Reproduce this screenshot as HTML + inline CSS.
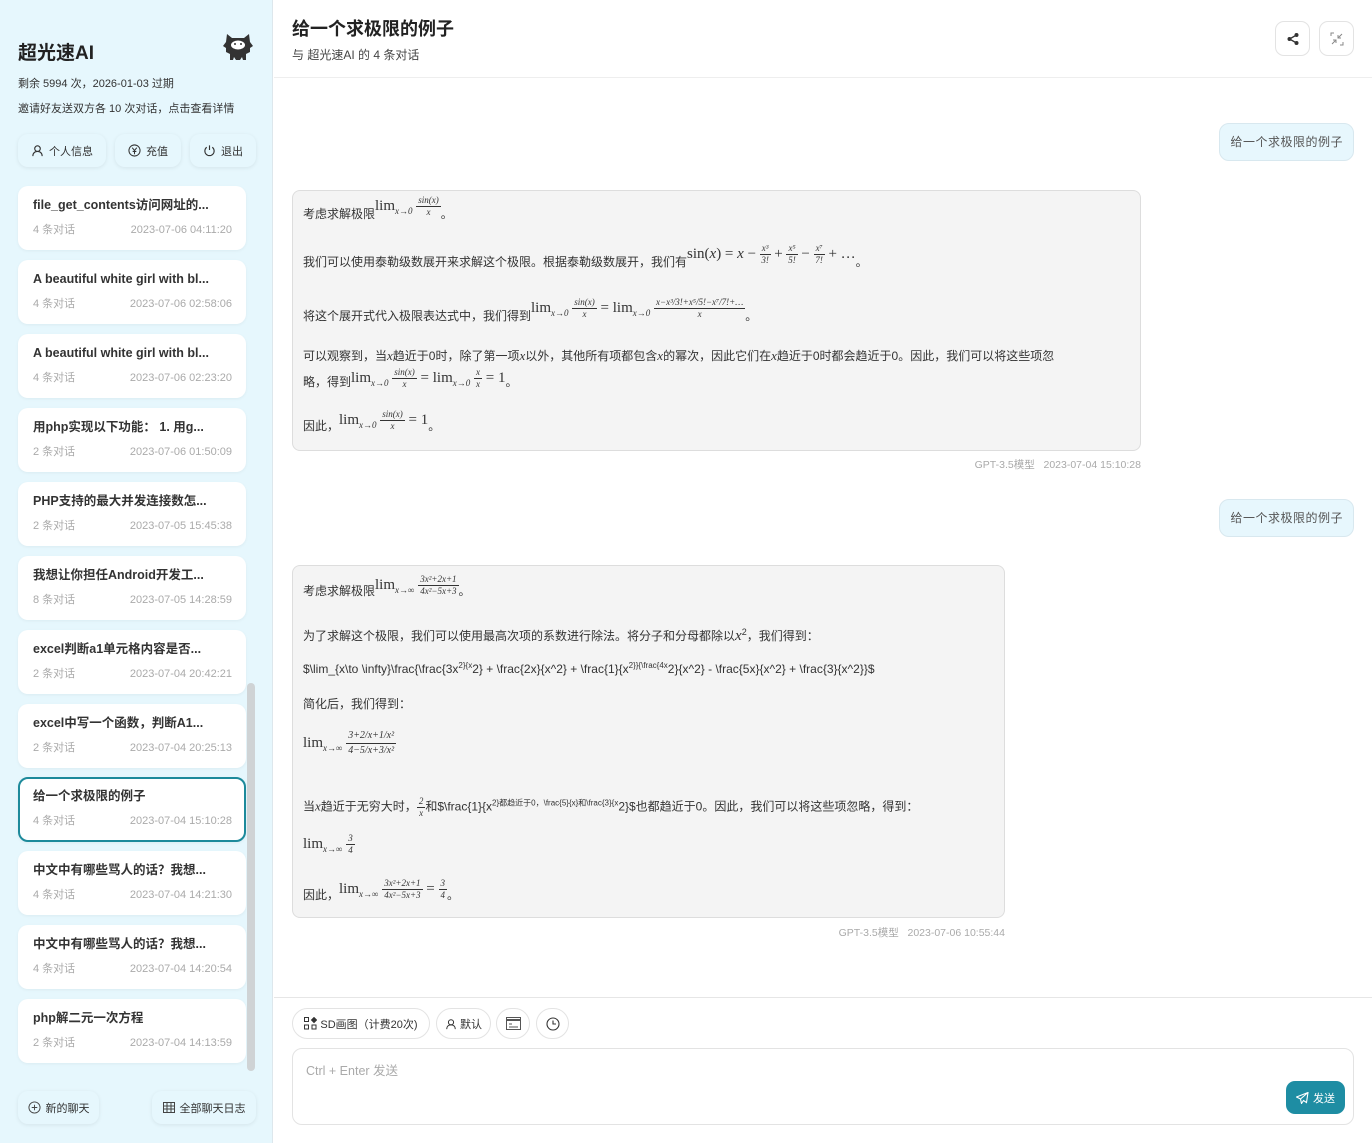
<!DOCTYPE html>
<html><head><meta charset="utf-8"><style>
*{box-sizing:border-box;margin:0;padding:0}
body{width:1372px;height:1143px;overflow:hidden;font-family:"Liberation Sans","Noto Sans CJK SC",sans-serif;background:#fff;color:#333;position:relative}
.sb{position:absolute;left:0;top:0;width:273px;height:1143px;background:#e6f7fd;border-right:1px solid #dde7ec}
.logo{position:absolute;left:18px;top:38px;font-size:19px;font-weight:bold;color:#222}
.sm{position:absolute;left:18px;font-size:11px;color:#333}
.btn{position:absolute;top:134px;height:33px;background:#e6f7fd;border-radius:10px;box-shadow:0 1px 4px rgba(0,0,0,.08);font-size:11px;color:#333;display:flex;align-items:center;justify-content:center;gap:5px}
.card{position:absolute;left:18px;width:228px;height:64px;background:#fff;border-radius:10px;box-shadow:0 1px 3px rgba(0,0,0,.05)}
.card .t{position:absolute;left:15px;top:9px;font-size:12.5px;font-weight:bold;color:#333;white-space:nowrap;line-height:20px}
.card .c,.card .d{position:absolute;top:37px;font-size:11px;color:#aaa;line-height:14px}
.card .c{left:15px}
.card .d{right:14px}
.card.sel{border:2px solid #1d8a9b}
.card.sel .t{left:13px;top:7px}.card.sel .c{left:13px;top:35px}.card.sel .d{right:12px;top:35px}
.scroll{position:absolute;left:247px;top:683px;width:8px;height:388px;background:#cfd3d5;border-radius:4px}
.hd{position:absolute;left:274px;top:0;right:0;height:78px;border-bottom:1px solid #eee}
.ib{position:absolute;top:21px;width:35px;height:35px;border:1px solid #e3e3e3;border-radius:9px;display:flex;align-items:center;justify-content:center}
.ub{position:absolute;right:18px;height:38px;padding:0 10px;background:#e7f7fd;border:1px solid #d8e8ef;border-radius:10px;font-size:12px;color:#555;line-height:36px;letter-spacing:.5px}
.ab{position:absolute;left:292px;background:#f4f4f4;border:1px solid #ddd;border-radius:8px;font-size:12px;color:#333}
.m{font-family:"Liberation Serif","DejaVu Serif",serif;font-size:15px}
.ln{position:absolute;left:10px;white-space:nowrap}
.fr{display:inline-flex;flex-direction:column;align-items:center;vertical-align:middle;font-size:9px;font-family:"Liberation Serif",serif;font-style:italic;line-height:11px}
.fr span:first-child{border-bottom:1px solid #333;padding:0 2px}
sub{font-size:9px;font-style:italic}
.meta{position:absolute;font-size:10.5px;color:#aaa}
.bot{position:absolute;left:274px;right:0;top:997px;bottom:0;border-top:1px solid #e6e6e6}
.pill{position:absolute;top:10px;height:31px;border:1px solid #e3e3e3;border-radius:16px;font-size:11px;color:#333;display:flex;align-items:center;justify-content:center;gap:3px}
</style></head><body>
<div class="sb">
<div class="logo">超光速AI</div>
<svg style="position:absolute;left:222px;top:30px" width="32" height="32" viewBox="0 0 32 32"><path d="M5 4l5 4h12l5-4 1 8 3 4-3 2v4l-4 2v6h-3l-1-3-2 3h-4l-2-3-1 3H8v-6l-4-2v-4l-3-2 3-4z" fill="#333"/><ellipse cx="16" cy="15" rx="7" ry="4.5" fill="#fff"/><circle cx="13" cy="14" r="1" fill="#333"/><circle cx="19" cy="14" r="1" fill="#333"/></svg>
<div class="sm" style="top:75px">剩余 5994 次，2026-01-03 过期</div>
<div class="sm" style="top:100px">邀请好友送双方各 10 次对话，点击查看详情</div>
<div class="btn" style="left:18px;width:88px"><svg width="13" height="13" viewBox="0 0 14 14" fill="none" stroke="#333" stroke-width="1.2"><circle cx="7" cy="5" r="3"/><path d="M2 13c0-3 2-5 5-5s5 2 5 5"/></svg>个人信息</div>
<div class="btn" style="left:115px;width:66px"><svg width="13" height="13" viewBox="0 0 14 14" fill="none" stroke="#333" stroke-width="1.1"><circle cx="7" cy="7" r="6"/><path d="M4.5 4L7 7l2.5-3M7 7v4M5 8h4"/></svg>充值</div>
<div class="btn" style="left:190px;width:66px"><svg width="13" height="13" viewBox="0 0 14 14" fill="none" stroke="#333" stroke-width="1.2"><path d="M4 3.5a5 5 0 1 0 6 0M7 1.5v5"/></svg>退出</div>

<div class="card" style="top:186px"><div class="t">file_get_contents访问网址的...</div><div class="c">4 条对话</div><div class="d">2023-07-06 04:11:20</div></div>
<div class="card" style="top:260px"><div class="t">A beautiful white girl with bl...</div><div class="c">4 条对话</div><div class="d">2023-07-06 02:58:06</div></div>
<div class="card" style="top:334px"><div class="t">A beautiful white girl with bl...</div><div class="c">4 条对话</div><div class="d">2023-07-06 02:23:20</div></div>
<div class="card" style="top:408px"><div class="t">用php实现以下功能： 1. 用g...</div><div class="c">2 条对话</div><div class="d">2023-07-06 01:50:09</div></div>
<div class="card" style="top:482px"><div class="t">PHP支持的最大并发连接数怎...</div><div class="c">2 条对话</div><div class="d">2023-07-05 15:45:38</div></div>
<div class="card" style="top:556px"><div class="t">我想让你担任Android开发工...</div><div class="c">8 条对话</div><div class="d">2023-07-05 14:28:59</div></div>
<div class="card" style="top:630px"><div class="t">excel判断a1单元格内容是否...</div><div class="c">2 条对话</div><div class="d">2023-07-04 20:42:21</div></div>
<div class="card" style="top:704px"><div class="t">excel中写一个函数，判断A1...</div><div class="c">2 条对话</div><div class="d">2023-07-04 20:25:13</div></div>
<div class="card sel" style="top:777px;height:65px"><div class="t">给一个求极限的例子</div><div class="c">4 条对话</div><div class="d">2023-07-04 15:10:28</div></div>
<div class="card" style="top:851px"><div class="t">中文中有哪些骂人的话？我想...</div><div class="c">4 条对话</div><div class="d">2023-07-04 14:21:30</div></div>
<div class="card" style="top:925px"><div class="t">中文中有哪些骂人的话？我想...</div><div class="c">4 条对话</div><div class="d">2023-07-04 14:20:54</div></div>
<div class="card" style="top:999px"><div class="t">php解二元一次方程</div><div class="c">2 条对话</div><div class="d">2023-07-04 14:13:59</div></div>
<div class="scroll"></div>
<div class="btn" style="top:1091px;left:18px;width:81px"><svg width="13" height="13" viewBox="0 0 14 14" fill="none" stroke="#444" stroke-width="1"><circle cx="7" cy="7" r="6"/><path d="M7 4v6M4 7h6"/></svg>新的聊天</div>
<div class="btn" style="top:1091px;left:152px;width:104px"><svg width="12" height="11" viewBox="0 0 12 11" fill="none" stroke="#444" stroke-width="1"><rect x=".5" y=".5" width="11" height="10"/><path d="M.5 4h11M.5 7h11M4 .5v10M8 .5v10"/></svg>全部聊天日志</div>
</div>

<div class="hd">
<div style="position:absolute;left:18px;top:15px;font-size:18px;font-weight:bold;color:#222">给一个求极限的例子</div>
<div style="position:absolute;left:18px;top:46px;font-size:12px;color:#444">与 超光速AI 的 4 条对话</div>
<div class="ib" style="left:1001px"><svg width="14" height="14" viewBox="0 0 14 14"><circle cx="10.5" cy="3" r="2" fill="#333"/><circle cx="10.5" cy="11" r="2" fill="#333"/><circle cx="3.5" cy="7" r="2" fill="#333"/><path d="M10.5 3L3.5 7l7 4" stroke="#333" stroke-width="1.3" fill="none"/></svg></div>
<div class="ib" style="left:1045px"><svg width="14" height="14" viewBox="0 0 14 14" fill="none" stroke="#888" stroke-width="1"><path d="M1 4V1h3M13 10v3h-3M12 2L8 6M8 3v3h3M2 12l4-4M3 8h3v3"/></svg></div>
</div>

<div class="ub" style="top:123px">给一个求极限的例子</div>
<div class="ab" style="top:190px;width:849px;height:261px">
<div class="ln" style="top:12px">考虑求解极限<span class="m" style="position:relative;top:-8px">lim<sub>x→0</sub> <span class="fr"><span>sin(x)</span><span>x</span></span></span>。</div>
<div class="ln" style="top:60px">我们可以使用泰勒级数展开来求解这个极限。根据泰勒级数展开，我们有<span class="m" style="position:relative;top:-8px">sin(<i>x</i>) = <i>x</i> − <span class="fr"><span>x³</span><span>3!</span></span> + <span class="fr"><span>x⁵</span><span>5!</span></span> − <span class="fr"><span>x⁷</span><span>7!</span></span> + …</span>。</div>
<div class="ln" style="top:114px">将这个展开式代入极限表达式中，我们得到<span class="m" style="position:relative;top:-8px">lim<sub>x→0</sub> <span class="fr"><span>sin(x)</span><span>x</span></span> = lim<sub>x→0</sub> <span class="fr"><span>x−x³/3!+x⁵/5!−x⁷/7!+…</span><span>x</span></span></span>。</div>
<div class="ln" style="top:156px">可以观察到，当<i class="m" style="font-size:13px">x</i>趋近于0时，除了第一项<i class="m" style="font-size:13px">x</i>以外，其他所有项都包含<i class="m" style="font-size:13px">x</i>的幂次，因此它们在<i class="m" style="font-size:13px">x</i>趋近于0时都会趋近于0。因此，我们可以将这些项忽</div>
<div class="ln" style="top:180px">略，得到<span class="m" style="position:relative;top:-4px">lim<sub>x→0</sub> <span class="fr"><span>sin(x)</span><span>x</span></span> = lim<sub>x→0</sub> <span class="fr"><span>x</span><span>x</span></span> = 1</span>。</div>
<div class="ln" style="top:224px">因此，<span class="m" style="position:relative;top:-6px">lim<sub>x→0</sub> <span class="fr"><span>sin(x)</span><span>x</span></span> = 1</span>。</div>
</div>
<div class="meta" style="left:968px;top:457px;width:173px;text-align:right">GPT-3.5模型 &nbsp; 2023-07-04 15:10:28</div>

<div class="ub" style="top:499px">给一个求极限的例子</div>
<div class="ab" style="top:565px;width:713px;height:353px">
<div class="ln" style="top:14px">考虑求解极限<span class="m" style="position:relative;top:-6px">lim<sub>x→∞</sub> <span class="fr"><span>3x²+2x+1</span><span>4x²−5x+3</span></span></span>。</div>
<div class="ln" style="top:61px">为了求解这个极限，我们可以使用最高次项的系数进行除法。将分子和分母都除以<i class="m">x</i><sup style="font-size:9px">2</sup>，我们得到：</div>
<div class="ln" style="top:95px">$\lim_{x\to \infty}\frac{\frac{3x<sup style="font-size:8px">2}{x</sup>2} + \frac{2x}{x^2} + \frac{1}{x<sup style="font-size:8px">2}}{\frac{4x</sup>2}{x^2} - \frac{5x}{x^2} + \frac{3}{x^2}}$</div>
<div class="ln" style="top:129px">简化后，我们得到：</div>
<div class="ln m" style="top:163px">lim<sub>x→∞</sub> <span class="fr" style="font-size:10px;line-height:14px"><span>3+2/x+1/x²</span><span>4−5/x+3/x²</span></span></div>
<div class="ln" style="top:230px">当<i class="m" style="font-size:13px">x</i>趋近于无穷大时，<span class="fr"><span>2</span><span>x</span></span>和$\frac{1}{x<sup style="font-size:8px">2}都趋近于0，\frac{5}{x}和\frac{3}{x</sup>2}$也都趋近于0。因此，我们可以将这些项忽略，得到：</div>
<div class="ln m" style="top:267px">lim<sub>x→∞</sub> <span class="fr"><span>3</span><span>4</span></span></div>
<div class="ln" style="top:318px">因此，<span class="m" style="position:relative;top:-6px">lim<sub>x→∞</sub> <span class="fr"><span>3x²+2x+1</span><span>4x²−5x+3</span></span> = <span class="fr"><span>3</span><span>4</span></span></span>。</div>
</div>
<div class="meta" style="left:805px;top:925px;width:200px;text-align:right">GPT-3.5模型 &nbsp; 2023-07-06 10:55:44</div>

<div class="bot">
<div class="pill" style="left:18px;width:138px"><svg width="13" height="13" viewBox="0 0 13 13" fill="none" stroke="#333" stroke-width="1"><rect x=".5" y=".5" width="4" height="4"/><rect x=".5" y="8" width="4" height="4"/><rect x="8" y="8" width="4" height="4"/><path d="M10 .5l2.5 2.5-2.5 2.5-2.5-2.5z" fill="#333"/></svg>SD画图（计费20次)</div>
<div class="pill" style="left:162px;width:55px"><svg width="12" height="12" viewBox="0 0 14 14" fill="none" stroke="#333" stroke-width="1.2"><circle cx="7" cy="5" r="3"/><path d="M2 13c0-3 2-5 5-5s5 2 5 5"/></svg>默认</div>
<div class="pill" style="left:222px;width:34px"><svg width="15" height="13" viewBox="0 0 15 13" fill="none" stroke="#555" stroke-width="1"><rect x=".5" y=".5" width="14" height="12"/><path d="M.5 3h14" stroke-width="2"/><path d="M3 7h3M3 10h9"/></svg></div>
<div class="pill" style="left:262px;width:33px"><svg width="14" height="14" viewBox="0 0 14 14" fill="none" stroke="#333" stroke-width="1.1"><circle cx="7" cy="7" r="6"/><path d="M7 3.5V7h3"/></svg></div>
<div style="position:absolute;left:18px;top:50px;width:1062px;height:77px;border:1px solid #e3e3e3;border-radius:10px"><div style="position:absolute;left:13px;top:11px;font-size:12.5px;color:#aaa">Ctrl + Enter 发送</div>
<div style="position:absolute;right:8px;top:32px;width:59px;height:33px;background:#1e8da3;border-radius:9px;color:#fff;font-size:11px;display:flex;align-items:center;justify-content:center;gap:4px"><svg width="13" height="12" viewBox="0 0 13 12" fill="none" stroke="#fff" stroke-width="1.1"><path d="M12 .5L.5 5l4 2 1 4.5 2-3 3 2z M12 .5L4.5 7"/></svg>发送</div></div>
</div>
</body></html>
